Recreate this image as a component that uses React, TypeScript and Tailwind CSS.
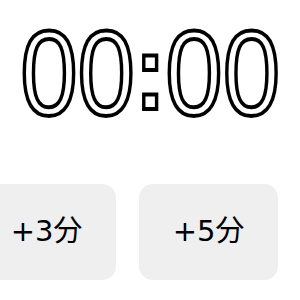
export default function App() {
  return (
    <div className="w-[300px] h-[300px] overflow-hidden bg-white flex flex-col">
      {/* Timer */}
      <div className="h-[146px] flex items-center justify-center">
        <span
          className="inline-block scale-x-[0.86] text-[120px] leading-none text-white [-webkit-text-stroke:4px_#000]"
          style={{ fontFamily: '"Liberation Sans", Arial, sans-serif' }}
        >
          00<span className="text-[106px] font-bold align-[6px]">:</span>00
        </span>
      </div>

      {/* Add-time buttons */}
      <div className="mt-[38px] flex justify-end gap-[23px] pr-[22px]">
        {['+3分', '+5分'].map(label => (
          <button
            key={label}
            className="w-[139px] h-[96px] shrink-0 rounded-[14px] bg-[#efefef] text-[29px] text-black"
            style={{ fontFamily: '"DejaVu Sans", "Noto Sans CJK JP", sans-serif' }}
          >
            {label}
          </button>
        ))}
      </div>
    </div>
  )
}
